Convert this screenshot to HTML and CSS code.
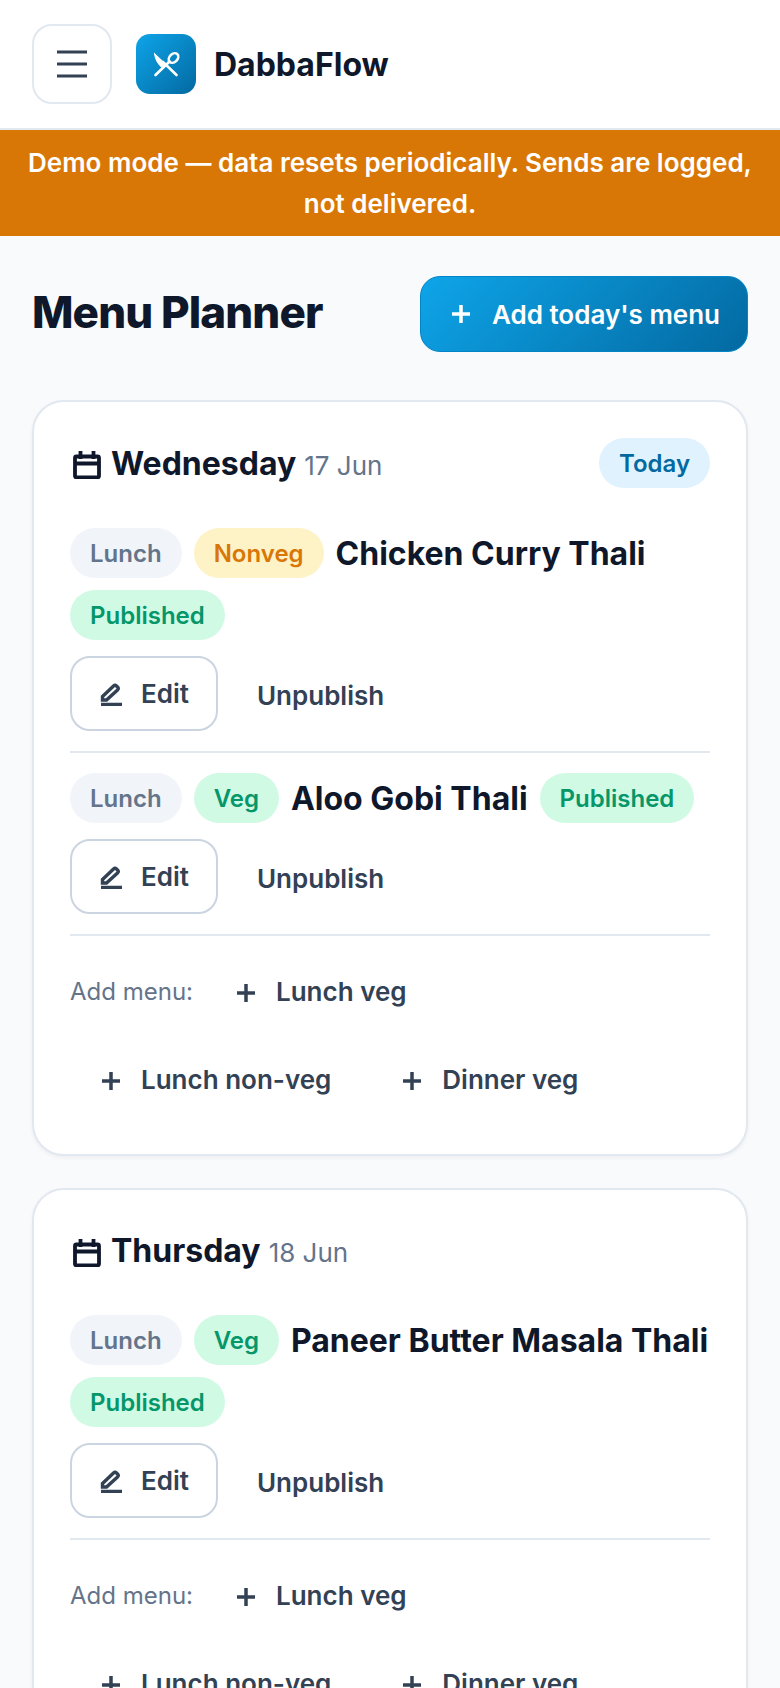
FILE: index.html
```html
<!DOCTYPE html>
<html>
<head>
	<title>Menu Planner | DabbaFlow</title>
	<meta charset="utf-8">
	<link rel="stylesheet" href="styles.css">
</head>

<body>

<header class="topbar">
	<button class="menu-btn">
		<svg width="32" height="32" viewBox="0 0 32 32"><path d="M1 4h30M1 16h30M1 28h30" fill="none" stroke="#334155" stroke-width="3.200"/></svg>
	</button>
	<div class="logo">
		<svg width="30" height="30" viewBox="0 0 30 30" fill="none" stroke="#fff" stroke-width="2.600" stroke-linecap="round">
			<path d="M4.500 26L18.500 12.500"/>
			<ellipse cx="22.500" cy="9" rx="4" ry="5.400" transform="rotate(45 22.500 9)"/>
			<path d="M25.500 26L12 13"/>
			<path d="M3.500 4.500L14.500 15L11 18.500C7 15.500 4 10 3.500 4.500z" fill="#fff" stroke-width="1"/>
		</svg>
	</div>
	<span class="brand">DabbaFlow</span>
</header>

<div class="banner">Demo mode — data resets periodically. Sends are logged, not delivered.</div>

<main class="page">

	<div class="page-head">
		<h1>Menu Planner</h1>
		<button class="primary-btn">
			<svg class="plus" width="18" height="18" viewBox="0 0 18 18"><path d="M9 0v18M0 9h18" fill="none" stroke="#fff" stroke-width="3.500"/></svg>
			Add today's menu
		</button>
	</div>

	<section class="card">
		<div class="day-head">
			<div class="day-title">
				<svg class="cal" width="28" height="28" viewBox="0 0 28 28"><path d="M3.500 5.500h21a1.500 1.500 0 0 1 1.500 1.500v18a1.500 1.500 0 0 1-1.500 1.500h-21a1.500 1.500 0 0 1-1.500-1.500v-18a1.500 1.500 0 0 1 1.500-1.500zM2 12.500h24M7.500 0v8M20.500 0v8" fill="none" stroke="#0f172a" stroke-width="3.800"/></svg>
				<span class="day-name">Wednesday</span>
				<span class="day-date">17 Jun</span>
			</div>
			<span class="pill pill-today">Today</span>
		</div>

		<div class="item">
			<div class="item-line">
				<span class="pill pill-meal">Lunch</span>
				<span class="pill pill-nonveg">Nonveg</span>
				<span class="item-name">Chicken Curry Thali</span>
				<span class="pill pill-pub">Published</span>
			</div>
			<div class="item-actions">
				<button class="edit-btn">
					<svg width="24" height="24" viewBox="0 0 24 24"><path d="M2.500 14.500L13.500 4q1.500-1.500 3 0l1 1q1.500 1.500 0 3L6.500 18H2.500zM1 22.500h21" fill="none" stroke="#334155" stroke-width="3.400"/></svg>
					Edit
				</button>
				<button class="text-btn">Unpublish</button>
			</div>
		</div>

		<div class="item">
			<div class="item-line">
				<span class="pill pill-meal">Lunch</span>
				<span class="pill pill-veg">Veg</span>
				<span class="item-name">Aloo Gobi Thali</span>
				<span class="pill pill-pub">Published</span>
			</div>
			<div class="item-actions">
				<button class="edit-btn">
					<svg width="24" height="24" viewBox="0 0 24 24"><path d="M2.500 14.500L13.500 4q1.500-1.500 3 0l1 1q1.500 1.500 0 3L6.500 18H2.500zM1 22.500h21" fill="none" stroke="#334155" stroke-width="3.400"/></svg>
					Edit
				</button>
				<button class="text-btn">Unpublish</button>
			</div>
		</div>

		<div class="add-row">
			<span class="add-label">Add menu:</span>
			<button class="add-btn"><svg class="plus" width="18" height="18" viewBox="0 0 18 18"><path d="M9 0v18M0 9h18" fill="none" stroke="#334155" stroke-width="3.500"/></svg>Lunch veg</button>
			<button class="add-btn"><svg class="plus" width="18" height="18" viewBox="0 0 18 18"><path d="M9 0v18M0 9h18" fill="none" stroke="#334155" stroke-width="3.500"/></svg>Lunch non-veg</button>
			<button class="add-btn"><svg class="plus" width="18" height="18" viewBox="0 0 18 18"><path d="M9 0v18M0 9h18" fill="none" stroke="#334155" stroke-width="3.500"/></svg>Dinner veg</button>
		</div>
	</section>

	<section class="card">
		<div class="day-head">
			<div class="day-title">
				<svg class="cal" width="28" height="28" viewBox="0 0 28 28"><path d="M3.500 5.500h21a1.500 1.500 0 0 1 1.500 1.500v18a1.500 1.500 0 0 1-1.500 1.500h-21a1.500 1.500 0 0 1-1.500-1.500v-18a1.500 1.500 0 0 1 1.500-1.500zM2 12.500h24M7.500 0v8M20.500 0v8" fill="none" stroke="#0f172a" stroke-width="3.800"/></svg>
				<span class="day-name">Thursday</span>
				<span class="day-date">18 Jun</span>
			</div>
		</div>

		<div class="item">
			<div class="item-line">
				<span class="pill pill-meal">Lunch</span>
				<span class="pill pill-veg">Veg</span>
				<span class="item-name">Paneer Butter Masala Thali</span>
				<span class="pill pill-pub">Published</span>
			</div>
			<div class="item-actions">
				<button class="edit-btn">
					<svg width="24" height="24" viewBox="0 0 24 24"><path d="M2.500 14.500L13.500 4q1.500-1.500 3 0l1 1q1.500 1.500 0 3L6.500 18H2.500zM1 22.500h21" fill="none" stroke="#334155" stroke-width="3.400"/></svg>
					Edit
				</button>
				<button class="text-btn">Unpublish</button>
			</div>
		</div>

		<div class="add-row">
			<span class="add-label">Add menu:</span>
			<button class="add-btn"><svg class="plus" width="18" height="18" viewBox="0 0 18 18"><path d="M9 0v18M0 9h18" fill="none" stroke="#334155" stroke-width="3.500"/></svg>Lunch veg</button>
			<button class="add-btn"><svg class="plus" width="18" height="18" viewBox="0 0 18 18"><path d="M9 0v18M0 9h18" fill="none" stroke="#334155" stroke-width="3.500"/></svg>Lunch non-veg</button>
			<button class="add-btn"><svg class="plus" width="18" height="18" viewBox="0 0 18 18"><path d="M9 0v18M0 9h18" fill="none" stroke="#334155" stroke-width="3.500"/></svg>Dinner veg</button>
		</div>
	</section>

</main>

</body>
</html>
```

FILE: styles.css
```css
html, body {
	height: 1688px;
	overflow: hidden;
}
body {
	margin: 0;
	background: #f8fafc;
	color: #0f172a;
	font-family: Inter, "Liberation Sans", sans-serif;
}
button {
	font-family: inherit;
	background: none;
	border: 0;
	padding: 0;
}
.topbar {
	display: flex;
	align-items: center;
	height: 128px;
	padding: 0 32px;
	background: #fff;
	border-bottom: 2px solid #e2e8f0;
}
.menu-btn {
	display: flex;
	align-items: center;
	justify-content: center;
	width: 80px;
	height: 80px;
	margin-right: 24px;
	border: 2px solid #e2e8f0;
	border-radius: 20px;
}
.logo {
	display: flex;
	align-items: center;
	justify-content: center;
	width: 60px;
	height: 60px;
	margin-right: 18px;
	border-radius: 14px;
	background: linear-gradient(135deg, #0ea5e9, #0369a1);
}
.brand {
	font-size: 32px;
	font-weight: 700;
}
.banner {
	padding: 12px 24px;
	background: #d97706;
	color: #fff;
	font-size: 26px;
	font-weight: 600;
	line-height: 41px;
	text-align: center;
}
.page {
	padding: 40px 32px;
}
.page-head {
	display: flex;
	align-items: center;
	justify-content: space-between;
	margin-bottom: 48px;
}
h1 {
	margin: 0 0 4px;
	font-size: 44px;
	font-weight: 800;
	letter-spacing: -0.9px;
}
.primary-btn {
	display: flex;
	align-items: center;
	height: 76px;
	padding: 0 27px 0 31px;
	border: 1px solid #0284c7;
	border-radius: 20px;
	background: linear-gradient(135deg, #0ea5e9, #0369a1);
	color: #fff;
	font-size: 26px;
	font-weight: 600;
}
.plus {
	flex: none;
	margin-right: 22px;
}
.card {
	margin-bottom: 32px;
	padding: 36px 36px 31px;
	background: #fff;
	border: 2px solid #e2e8f0;
	border-radius: 32px;
	box-shadow: 0 2px 4px rgba(15, 23, 42, 0.05);
}
.day-head {
	display: flex;
	align-items: center;
	justify-content: space-between;
	min-height: 49px;
	margin-bottom: 40px;
}
.day-title {
	display: flex;
	align-items: baseline;
	gap: 8px;
}
.cal {
	align-self: center;
	margin: 4px 2px 0 3px;
}
.day-name {
	font-size: 32px;
	font-weight: 700;
}
.day-date {
	font-size: 26px;
	color: #64748b;
}
.pill {
	display: inline-flex;
	align-items: center;
	height: 50px;
	padding: 0 20px;
	border-radius: 25px;
	font-size: 24px;
	font-weight: 600;
}
.pill-today {
	background: #e0f2fe;
	color: #0369a1;
}
.pill-meal {
	background: #f1f5f9;
	color: #64748b;
}
.pill-nonveg {
	background: #fef3c7;
	color: #d97706;
}
.pill-veg, .pill-pub {
	background: #d1fae5;
	color: #059669;
}
.item {
	padding-bottom: 20px;
	margin-bottom: 20px;
	border-bottom: 2px solid #e2e8f0;
}
.item-line {
	display: flex;
	flex-wrap: wrap;
	align-items: center;
	gap: 12px;
	margin-bottom: 16px;
}
.item-name {
	font-size: 32px;
	font-weight: 700;
}
.item-actions {
	display: flex;
	align-items: center;
	gap: 39px;
}
.edit-btn {
	display: flex;
	align-items: center;
	gap: 17px;
	height: 75px;
	padding: 0 27px 0 28px;
	border: 2px solid #cbd5e1;
	border-radius: 20px;
	color: #334155;
	font-size: 26px;
	font-weight: 600;
}
.text-btn {
	padding-top: 3px;
	color: #334155;
	font-size: 26px;
	font-weight: 600;
}
.add-row {
	display: flex;
	flex-wrap: wrap;
	align-items: center;
	column-gap: 8px;
	margin-top: -9px;
}
.add-label {
	margin-right: 4px;
	font-size: 24px;
	color: #64748b;
}
.add-btn {
	display: flex;
	align-items: center;
	height: 88px;
	padding: 0 32px;
	color: #334155;
	font-size: 26px;
	font-weight: 600;
}
.add-btn .plus {
	margin: 3px 21px 0 0;
}
```
